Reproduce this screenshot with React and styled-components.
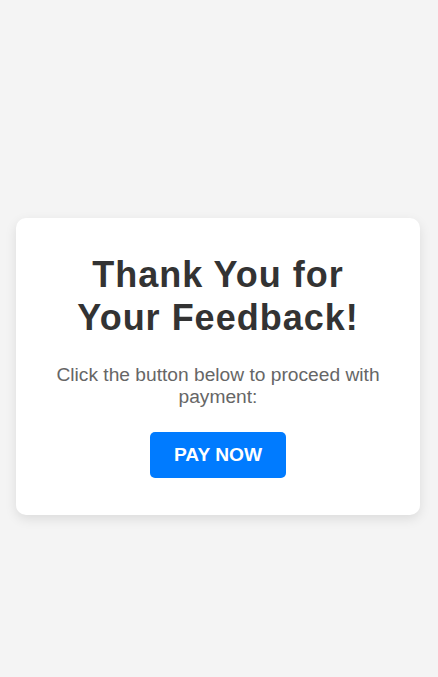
import React from "react";
import styled, { createGlobalStyle } from "styled-components";

const GlobalStyle = createGlobalStyle`
  * {
    box-sizing: border-box;
  }
  body {
    margin: 0;
    background: #f4f4f4;
    font-family: "Liberation Sans", Arial, sans-serif;
  }
`;

const Page = styled.div`
  min-height: 100vh;
  display: flex;
  justify-content: flex-start;
  align-items: center;
  padding: 56px 18px 0 16px;
`;

const Card = styled.div`
  width: 404px;
  background: #fff;
  border-radius: 10px;
  box-shadow: 0 4px 12px rgba(0, 0, 0, 0.1);
  padding: 35px 30px 37px;
  text-align: center;
`;

const Title = styled.h1`
  margin: 0 0 25px;
  font-size: 36px;
  line-height: 43px;
  letter-spacing: 1px;
  font-weight: bold;
  color: #333;
`;

const Text = styled.p`
  margin: 0 0 24px;
  font-size: 19.2px;
  color: #666;
`;

const PayButton = styled.button`
  border: none;
  border-radius: 5px;
  background: #007bff;
  color: #fff;
  font-family: inherit;
  font-size: 19.2px;
  line-height: 22px;
  font-weight: bold;
  padding: 12px 24px;
  cursor: pointer;
`;

export default function App() {
  return (
    <>
      <GlobalStyle />
      <Page>
        <Card>
          <Title>Thank You for Your Feedback!</Title>
          <Text>Click the button below to proceed with payment:</Text>
          <PayButton>PAY NOW</PayButton>
        </Card>
      </Page>
    </>
  );
}
